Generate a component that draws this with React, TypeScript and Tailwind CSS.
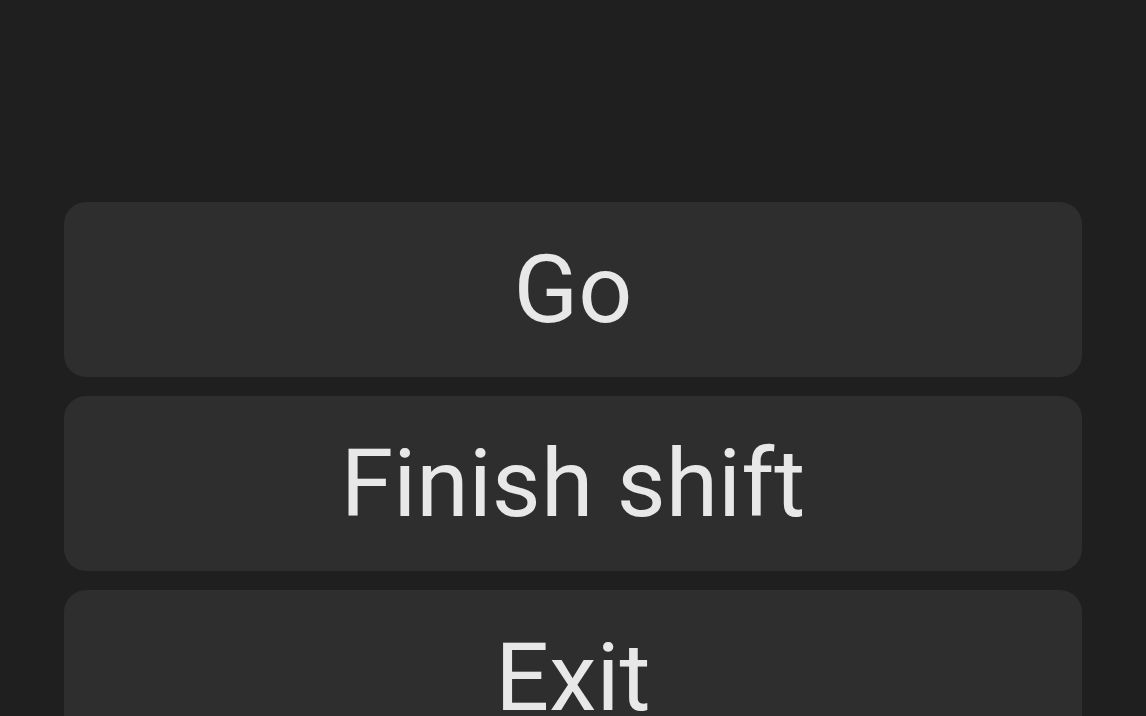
import React from "react";

export default function App() {
  const items = ["Go", "Finish shift", "Exit"];
  return (
    <div
      className="w-[1146px] h-[716px] overflow-hidden bg-[#1f1f1f] px-[64px] pt-[202px] flex flex-col gap-[19px]"
      style={{ fontFamily: "Roboto, 'Noto Sans', sans-serif" }}
    >
      {items.map((t) => (
        <button
          key={t}
          className="shrink-0 h-[175px] w-full rounded-[22px] bg-[#2e2e2e] text-[#e8e8e8] text-[95px] leading-none flex items-center justify-center"
        >
          {t}
        </button>
      ))}
    </div>
  );
}
